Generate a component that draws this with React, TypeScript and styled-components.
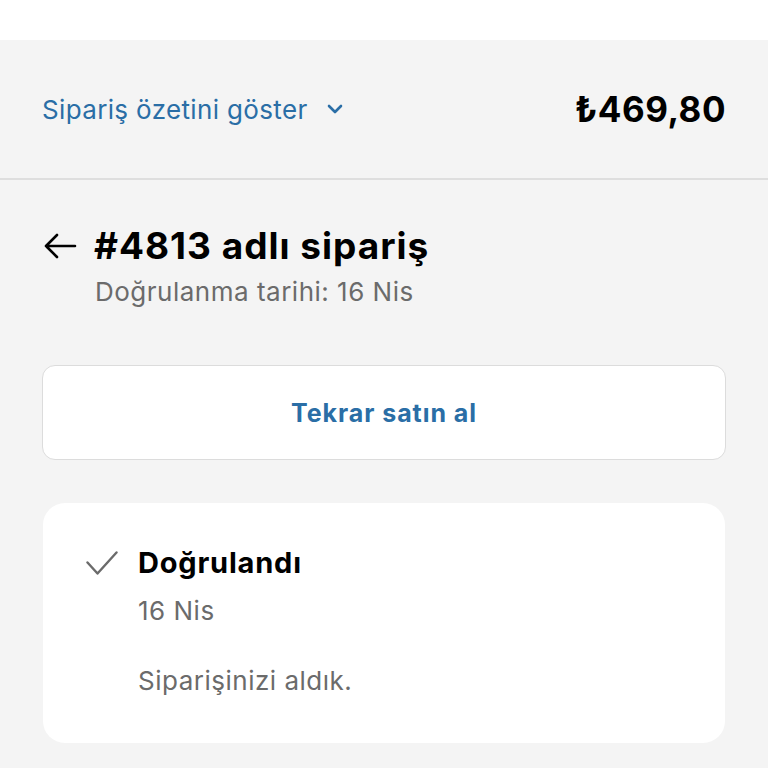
import React from "react";
import styled, { createGlobalStyle } from "styled-components";

const Global = createGlobalStyle`
  html, body { margin: 0; padding: 0; background: #ffffff; }
  body { font-family: Inter, "Noto Sans", Roboto, sans-serif; -webkit-font-smoothing: antialiased; }
  * { box-sizing: border-box; }
`;

const Page = styled.div`
  width: 768px;
  height: 768px;
  overflow: hidden;
  display: flex;
  flex-direction: column;
  background: #ffffff;
`;

const TopGap = styled.div`
  height: 40px;
  background: #ffffff;
  flex-shrink: 0;
`;

const Main = styled.div`
  flex: 1;
  background: #f4f4f4;
  display: flex;
  flex-direction: column;
`;

const SummaryBar = styled.div`
  height: 140px;
  border-bottom: 2px solid #dedede;
  display: flex;
  align-items: center;
  justify-content: space-between;
  padding: 0 42px;
`;

const SummaryToggle = styled.button`
  border: 0;
  background: none;
  padding: 0;
  display: flex;
  align-items: center;
  gap: 18px;
  font-family: inherit;
  font-size: 26px;
  color: #2a6ea6;
  letter-spacing: 0.35px;
`;

const Price = styled.div`
  font-size: 35px;
  font-weight: 700;
  color: #000;
  letter-spacing: 0.5px;
`;

const Content = styled.div`
  padding: 44px 42px 0;
  display: flex;
  flex-direction: column;
`;

const TitleRow = styled.div`
  display: flex;
  align-items: center;
  gap: 16px;
`;

const Title = styled.h1`
  margin: 0;
  font-size: 37px;
  font-weight: 700;
  color: #000;
  letter-spacing: 1px;
  line-height: 44px;
`;

const Subtitle = styled.div`
  margin: 7px 0 0 53px;
  font-size: 26px;
  color: #6b6b6b;
  line-height: 34px;
  letter-spacing: 0.5px;
`;

const ActionButton = styled.button`
  margin-top: 56px;
  height: 95px;
  width: 100%;
  background: #ffffff;
  border: 1.5px solid #dcdcdc;
  border-radius: 13px;
  font-family: inherit;
  font-size: 25px;
  font-weight: 700;
  color: #2a6ea6;
  letter-spacing: 0.95px;
`;

const Card = styled.div`
  margin: 43px 1px 0;
  background: #ffffff;
  border-radius: 22px;
  padding: 42px 44px 45px 43px;
  display: flex;
  gap: 20px;
`;

const StatusBody = styled.div`
  display: flex;
  flex-direction: column;
`;

const StatusTitle = styled.div`
  font-size: 29px;
  font-weight: 700;
  color: #000;
  line-height: 36px;
  letter-spacing: 0.8px;
`;

const Muted = styled.div<{ $gap: number }>`
  margin-top: ${(p) => p.$gap}px;
  font-size: 26px;
  color: #6b6b6b;
  line-height: 34px;
  letter-spacing: 0.5px;
`;

const IconWrap = styled.div`
  padding-top: 6px;
  display: flex;
  align-items: flex-start;
`;

export default function App() {
  return (
    <>
      <Global />
      <Page>
        <TopGap />
        <Main>
          <SummaryBar>
            <SummaryToggle>
              Sipariş özetini göster
              <svg width="18" height="12" viewBox="0 0 18 12" fill="none">
                <path d="M3 3l6 6 6-6" stroke="#2a6ea6" strokeWidth="2.6" strokeLinecap="round" strokeLinejoin="round" />
              </svg>
            </SummaryToggle>
            <Price>₺469,80</Price>
          </SummaryBar>
          <Content>
            <TitleRow>
              <svg width="36" height="30" viewBox="0 0 36 30" fill="none">
                <path d="M33 15H4M15 4L4 15l11 11" stroke="#000" strokeWidth="2.6" strokeLinecap="round" strokeLinejoin="round" />
              </svg>
              <Title>#4813 adlı sipariş</Title>
            </TitleRow>
            <Subtitle>Doğrulanma tarihi: 16 Nis</Subtitle>
            <ActionButton>Tekrar satın al</ActionButton>
            <Card>
              <IconWrap>
                <svg width="32" height="24" viewBox="0 0 32 24" fill="none">
                  <path d="M1.5 11.5l10 11L30.5 1.5" stroke="#6b6b6b" strokeWidth="2.4" strokeLinecap="round" strokeLinejoin="round" />
                </svg>
              </IconWrap>
              <StatusBody>
                <StatusTitle>Doğrulandı</StatusTitle>
                <Muted $gap={13}>16 Nis</Muted>
                <Muted $gap={36}>Siparişinizi aldık.</Muted>
              </StatusBody>
            </Card>
          </Content>
        </Main>
      </Page>
    </>
  );
}
